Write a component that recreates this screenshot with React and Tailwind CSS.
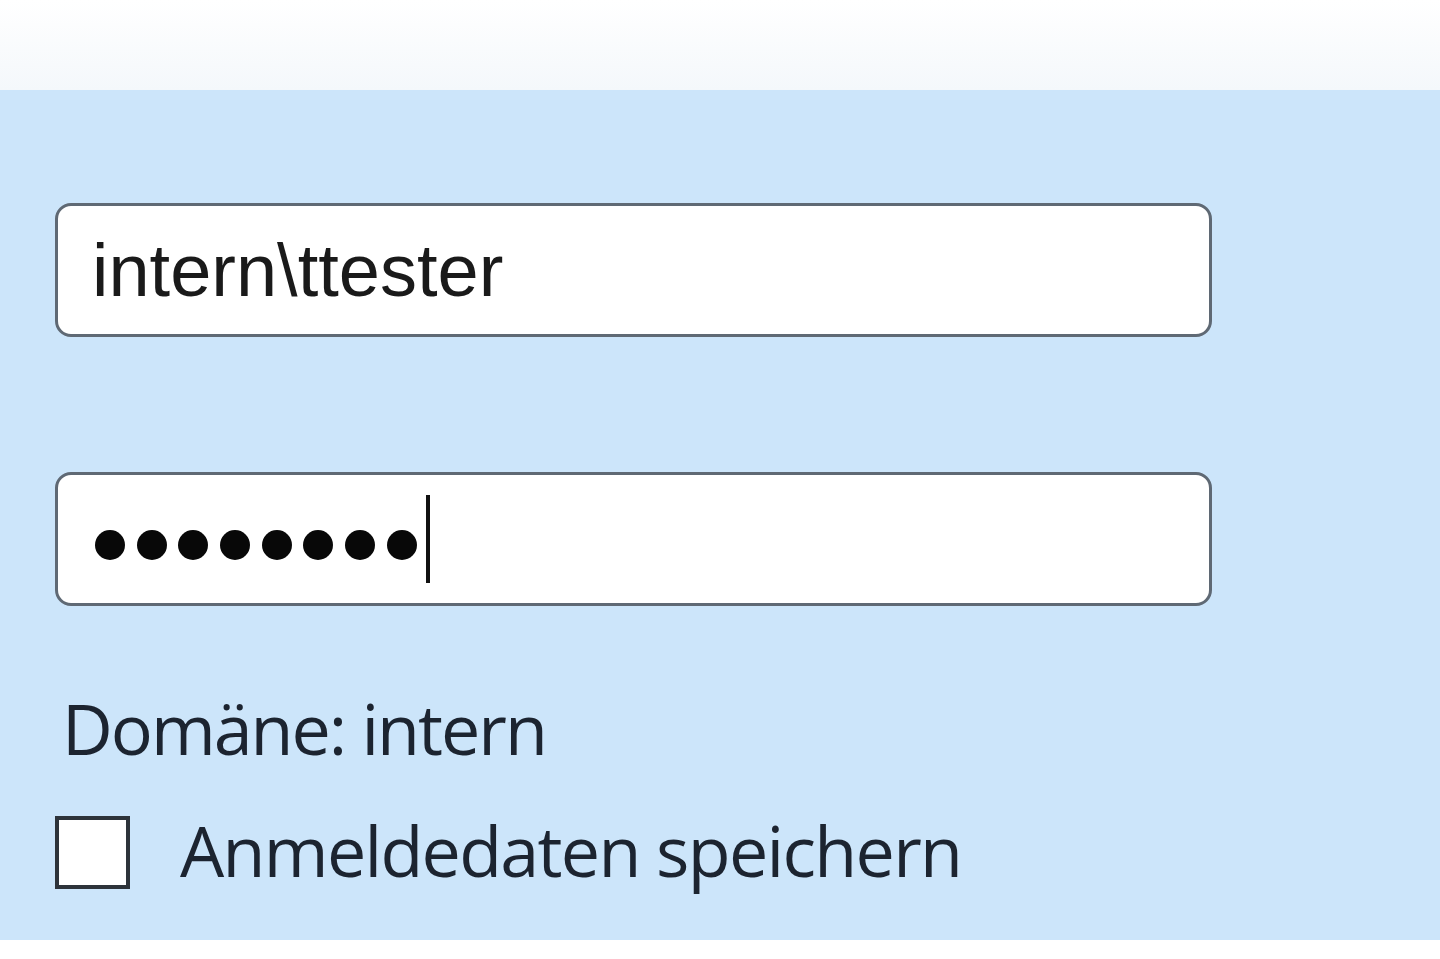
export default function App() {
  const dots = [0, 1, 2, 3, 4, 5, 6, 7];
  return (
    <div className="w-[1440px] h-[959px] overflow-hidden bg-white flex flex-col">
      <div className="h-[90px] bg-gradient-to-b from-white to-[#f4f8fb]" />
      <div className="h-[850px] bg-[#cce5fa] pl-[55px] pt-[113px] flex flex-col">
        <div className="w-[1157px] h-[134px] bg-white border-[3px] border-[#5f6974] rounded-[16px] flex items-center pl-[34px]">
          <span
            className="text-[74px] leading-none text-[#1a1a1a] pt-[2px]"
            style={{ fontFamily: '"Liberation Sans", Arial, sans-serif' }}
          >
            intern\ttester
          </span>
        </div>
        <div className="mt-[135px] w-[1157px] h-[134px] bg-white border-[3px] border-[#5f6974] rounded-[16px] flex items-center pl-[37px]">
          <div className="flex items-center gap-[11.7px] pt-[12px]">
            {dots.map((d) => (
              <div key={d} className="w-[30px] h-[30px] rounded-full bg-[#080808]" />
            ))}
          </div>
          <div className="ml-[9px] w-[4px] h-[88px] bg-[#111]" />
        </div>
        <div
          className="mt-[87px] ml-[7px] text-[70px] leading-none tracking-[-2px] text-[#1c2430]"
          style={{ fontFamily: '"Open Sans", "Noto Sans", sans-serif' }}
        >
          Domäne: intern
        </div>
        <div className="mt-[52px] flex items-center">
          <div className="w-[75px] h-[73px] bg-white border-[4px] border-[#2d333a]" />
          <span
            className="ml-[50px] text-[70px] leading-none tracking-[-1.7px] text-[#1c2430] pb-[4px]"
            style={{ fontFamily: '"Open Sans", "Noto Sans", sans-serif' }}
          >
            Anmeldedaten speichern
          </span>
        </div>
      </div>
    </div>
  );
}
